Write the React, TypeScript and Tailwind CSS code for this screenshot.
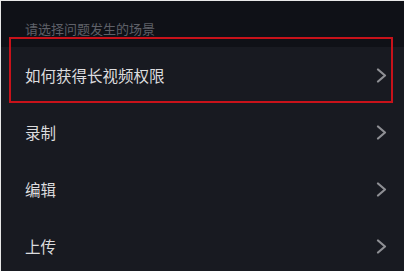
import React from "react";

const rows = ["如何获得长视频权限", "录制", "编辑", "上传"];

const Chevron: React.FC = () => (
  <svg className="h-[15px] w-[11px]" viewBox="0 0 11 15" fill="none" stroke="#8e8f94" strokeWidth="2.2" strokeLinecap="round" strokeLinejoin="round">
    <path d="M2 1.5L9 7.5L2 13.5" />
  </svg>
);

const App: React.FC = () => {
  return (
    <div
      className="relative h-[271px] w-[404px] overflow-hidden border-l border-t border-[#e8e8e8] bg-[#181a21]"
      style={{ fontFamily: '"Noto Sans CJK SC", "Noto Sans", sans-serif' }}
    >
      {/* 헤더 */}
      <div className="flex h-[46px] items-end bg-[#0f1117] pb-[12px] pl-[24px] text-[13px] leading-none text-[#5e6068]">
        请选择问题发生的场景
      </div>

      {/* 목록 */}
      <div className="flex flex-col">
        {rows.map((label) => (
          <div key={label} className="flex h-[57px] items-center justify-between pl-[24px] pr-[17px]">
            <span className="text-[15.5px] leading-none text-[#dcdcde]">{label}</span>
            <Chevron />
          </div>
        ))}
      </div>

      {/* 빨간 강조 박스 */}
      <div className="absolute left-[8px] top-[36px] h-[66px] w-[384px] border-2 border-[#c8121a]" />
    </div>
  );
};

export default App;
